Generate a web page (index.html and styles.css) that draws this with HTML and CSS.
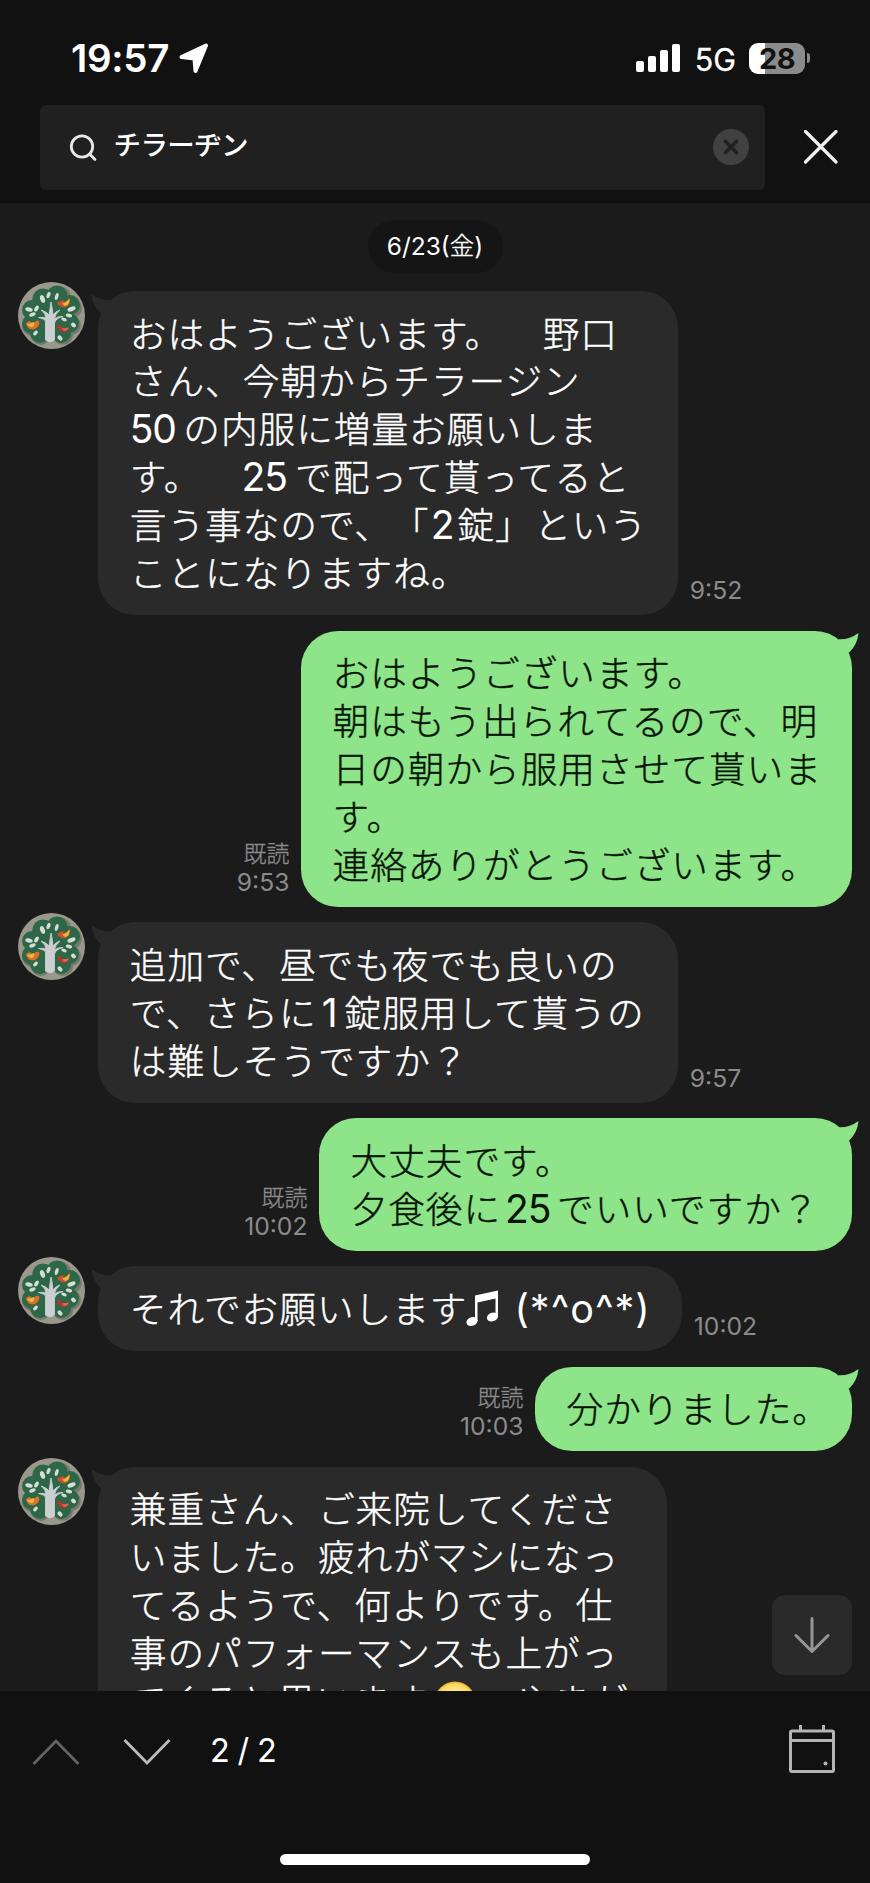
FILE: index.html
```html
<!DOCTYPE html>
<html lang="ja">
<head>
<meta charset="utf-8">
<title>トーク検索</title>
<link rel="stylesheet" href="styles.css">
</head>
<body>
<svg width="0" height="0" class="defs">
  <defs>
    <clipPath id="round"><circle cx="33.5" cy="33.5" r="33.5"/></clipPath>
    <radialGradient id="face" cx="50%" cy="50%" r="50%">
      <stop offset="0.6" stop-color="#ffe680"/><stop offset="0.88" stop-color="#fbd95c"/><stop offset="1" stop-color="#e5a932"/>
    </radialGradient>
    <symbol id="tree" viewBox="0 0 67 67">
      <g clip-path="url(#round)">
        <rect width="67" height="67" fill="#9a988b"/>
        <g fill="#75786c">
          <circle cx="26" cy="19" r="12"/><circle cx="41" cy="16" r="12"/><circle cx="54" cy="26" r="10"/><circle cx="53" cy="43" r="10"/><circle cx="14" cy="44" r="10"/><circle cx="23" cy="53" r="10"/><circle cx="45" cy="53" r="10"/>
        </g>
        <g fill="#2d6748">
          <circle cx="25" cy="17" r="10.5"/><circle cx="39" cy="14" r="10.5"/><circle cx="52" cy="23" r="10"/><circle cx="14" cy="28" r="10"/><circle cx="51" cy="41" r="10"/><circle cx="14" cy="42" r="10"/><circle cx="22" cy="51" r="10"/><circle cx="43" cy="51" r="10"/><circle cx="33" cy="34" r="19"/>
        </g>
        <path d="M27.500 58 V39 Q27 37 20.500 35.500 Q26 35 28 36 Q28 32 23 28 Q29 30 31 33 Q32 27 33 20 Q34.500 27 35 33 Q38 29 42 28 Q37 32 36.500 37 Q40 34 45 34.500 Q38 36 36.500 41 V58 Q32 61.500 27.500 58Z" fill="#cbcfd1" stroke="#cbcfd1" stroke-width="0.900"/>
        <g fill="#d5ddd4">
          <ellipse cx="24.500" cy="17" rx="2.300" ry="4" transform="rotate(-20 24.500 17)"/><ellipse cx="30.500" cy="13" rx="1.800" ry="3.300" transform="rotate(20 30.500 13)"/><ellipse cx="38.700" cy="14.500" rx="1.700" ry="3.600" transform="rotate(15 38.700 14.500)"/>
          <ellipse cx="11" cy="27.500" rx="3.800" ry="2.100" transform="rotate(15 11 27.500)"/><ellipse cx="18.500" cy="26.500" rx="1.800" ry="3.300" transform="rotate(30 18.500 26.500)"/><ellipse cx="14.500" cy="32.500" rx="3.300" ry="1.800" transform="rotate(-20 14.500 32.500)"/>
          <ellipse cx="53.500" cy="27" rx="4.200" ry="2.200" transform="rotate(-20 53.500 27)"/><ellipse cx="51" cy="33.500" rx="3.200" ry="1.700" transform="rotate(15 51 33.500)"/><ellipse cx="46" cy="37.500" rx="2.800" ry="1.600" transform="rotate(20 46 37.500)"/>
          <ellipse cx="55.500" cy="43" rx="2.700" ry="2.100" transform="rotate(40 55.500 43)"/><ellipse cx="17.500" cy="51" rx="2.900" ry="1.700" transform="rotate(-45 17.500 51)"/><ellipse cx="42" cy="56" rx="2.900" ry="2" transform="rotate(50 42 56)"/>
        </g>
        <path d="M8 41 L11.500 39 Q15 42 18 39 Q20 37.500 21.500 40 Q21 47 14.500 47.500 Q9 47 8 41Z" fill="#df702c"/><path d="M8.500 42 Q13 42 16 40 Q17 45 12.500 45Z" fill="#e8bd42"/>
        <path d="M39 20.500 L42 19.500 Q44 17 47 20 L52 16 Q53 23 47 25.500 Q41 25 39 20.500Z" fill="#cf512b"/><path d="M44 21.500 Q48 21 51.500 16.500 Q52 23 47 24Z" fill="#edb63b"/>
        <path d="M39 43.500 Q42 41 44.500 46 L51 45.500 Q50 50 45 50.500 Q40 49 39 43.500Z" fill="#a9392c"/><path d="M44 46.500 L51 45.500 Q49 50 45 48.500Z" fill="#d8664b"/>
      </g>
    </symbol>
    <symbol id="tail" viewBox="0 0 22 24">
      <path d="M0.500 1 Q10 8 20.500 7.300 L18 19 L10 20.800 Q1.500 12.500 0.500 1Z" fill="currentColor"/>
    </symbol>
  </defs>
</svg>

<div class="screen">
  <header class="top">
    <div class="status">
      <span class="clock">19:57</span>
      <svg class="loc" width="30" height="31" viewBox="0 0 30 31"><path d="M2.500 14 L27 2.500 L16.500 28 L15.500 15.500 Z" fill="#fff" stroke="#fff" stroke-width="4" stroke-linejoin="round"/></svg>
      <svg class="signal" width="44" height="28" viewBox="0 0 44 28" fill="#fff"><rect y="17" width="8" height="11" rx="2"/><rect x="12" y="12" width="8" height="16" rx="2"/><rect x="24" y="6" width="8" height="22" rx="2"/><rect x="36" width="8" height="28" rx="2"/></svg>
      <span class="net">5G</span>
      <div class="battery"><span>28</span></div>
      <i class="tip"></i>
    </div>
    <div class="searchrow">
      <div class="search">
        <svg width="28" height="28" viewBox="0 0 28 28" fill="none" stroke="#e8e8e8" stroke-width="2.800" stroke-linecap="round"><circle cx="13" cy="12.500" r="10.700"/><path d="M20.800 20.300 L26 25.500"/></svg>
        <span class="query">チラーヂン</span>
        <svg class="clear" width="36" height="36" viewBox="0 0 36 36"><circle cx="18" cy="18" r="18" fill="#414141"/><path d="M12.300 12.300 L23.700 23.700 M23.700 12.300 L12.300 23.700" stroke="#202020" stroke-width="3.400" stroke-linecap="round"/></svg>
      </div>
      <svg class="close" width="34" height="34" viewBox="0 0 34 34"><path d="M1.500 1.500 L32 32 M32 1.500 L1.500 32" stroke="#f0f0f0" stroke-width="3.200" stroke-linecap="round"/></svg>
    </div>
  </header>

  <main class="chat">
    <div class="date"><span>6/23(<span class="jp">金</span>)</span></div>

    <div class="row in">
      <svg class="avatar"><use href="#tree"/></svg>
      <div class="bubble w1"><svg class="tail"><use href="#tail"/></svg>おはようございます。<span class="gap">　</span>野口<br>さん、今朝からチラージン<br><b class="two">50</b>の内服に増量お願いしま<br>す。<span class="gap">　</span><b class="two">25</b>で配って貰ってると<br>言う事なので、「<b class="one">2</b>錠<span class="close-q">」</span>という<br>ことになりますね。</div>
      <div class="meta">9:52</div>
    </div>

    <div class="row out">
      <div class="meta"><span class="read">既読</span>9:53</div>
      <div class="bubble w2"><svg class="tail"><use href="#tail"/></svg>おはようございます。<br>朝はもう出られてるので、明<br>日の朝から服用させて貰いま<br>す。<br>連絡ありがとうございます。</div>
    </div>

    <div class="row in">
      <svg class="avatar"><use href="#tree"/></svg>
      <div class="bubble w1"><svg class="tail"><use href="#tail"/></svg>追加で、昼でも夜でも良いの<br>で、さらに<b class="one">1</b>錠服用して貰うの<br>は難しそうですか？</div>
      <div class="meta">9:57</div>
    </div>

    <div class="row out">
      <div class="meta"><span class="read">既読</span>10:02</div>
      <div class="bubble w3"><svg class="tail"><use href="#tail"/></svg>大丈夫です。<br>夕食後に<b class="two mid">25</b>でいいですか？</div>
    </div>

    <div class="row in">
      <svg class="avatar"><use href="#tree"/></svg>
      <div class="bubble w4"><svg class="tail"><use href="#tail"/></svg>それでお願いします<svg class="note" width="33" height="37" viewBox="0 0 33 37" fill="#fff"><path d="M9 5.500 L32 0.500 V27 H29.500 V8.500 L11.500 12.500 V31 H9Z"/><ellipse cx="6" cy="31.500" rx="5.700" ry="4.300" transform="rotate(-20 6 31.500)"/><ellipse cx="26.500" cy="27" rx="5.700" ry="4.300" transform="rotate(-20 26.500 27)"/></svg><b class="kao">(*^o^*)</b></div>
      <div class="meta">10:02</div>
    </div>

    <div class="row out">
      <div class="meta"><span class="read">既読</span>10:03</div>
      <div class="bubble w5"><svg class="tail"><use href="#tail"/></svg>分かりました。</div>
    </div>

    <div class="row in">
      <svg class="avatar"><use href="#tree"/></svg>
      <div class="bubble w6"><svg class="tail"><use href="#tail"/></svg>兼重さん、ご来院してくださ<br>いました。疲れがマシになっ<br>てるようで、何よりです。仕<br>事のパフォーマンスも上がっ<br>てくると思います<svg class="emoji" width="42" height="42" viewBox="0 0 42 42"><circle cx="21" cy="21" r="20.500" fill="url(#face)"/><path d="M10 17 q3 -4 6 0 M26 17 q3 -4 6 0 M11 25 q10 12 20 0" fill="none" stroke="#7a4a16" stroke-width="2.500" stroke-linecap="round"/></svg>。やまが</div>
    </div>

    <div class="jump"><svg width="36" height="36" viewBox="0 0 36 36" fill="none" stroke="#969696" stroke-width="3" stroke-linecap="round" stroke-linejoin="round"><path d="M18 1.500 V34.500 M2 18.500 L18 34.500 L34 18.500"/></svg></div>
  </main>

  <footer class="bottom">
    <div class="tools">
      <svg width="48" height="26" viewBox="0 0 48 26" fill="none" stroke="#636363" stroke-width="2.800"><path d="M1.500 25 L24 2 L46.500 25"/></svg>
      <svg class="down" width="48" height="26" viewBox="0 0 48 26" fill="none" stroke="#bcbcbc" stroke-width="2.800"><path d="M1.500 1 L24 24 L46.500 1"/></svg>
      <span class="count">2 / 2</span>
      <svg class="cal" width="46" height="48" viewBox="0 0 46 48" fill="none" stroke="#b4b4b4" stroke-width="3"><rect x="1.500" y="6" width="43" height="40.500" rx="1.500"/><path d="M1.500 15.500 H44.500 M11.500 0 V6 M34.500 0 V6"/><circle cx="36.500" cy="38.500" r="2" fill="#b4b4b4" stroke="none"/></svg>
    </div>
    <div class="home"></div>
  </footer>
</div>
</body>
</html>
```
FILE: styles.css
```css
* { box-sizing: border-box; }
body { margin: 0; background: #111; font-family: Inter, "Noto Sans CJK JP", sans-serif; }
svg { display: block; flex: none; }
b { font-weight: 400; }
.defs { position: absolute; }
.screen { width: 870px; height: 1883px; display: flex; flex-direction: column; background: #111; overflow: hidden; }

.top { height: 203px; flex: none; }
.status { height: 105px; padding: 11px 60px 0 71px; display: flex; align-items: center; color: #fff; }
.clock { font-size: 38.500px; font-weight: 600; width: 109px; letter-spacing: -0.300px; white-space: nowrap; }
.loc { margin-top: 1px; }
.signal { margin-left: 427px; }
.net { font-size: 30.500px; font-weight: 400; margin-left: 15px; width: 55px; margin-top: 2px; -webkit-text-stroke: 0.300px #fff; }
.battery { width: 56px; height: 31px; border-radius: 9px; background: linear-gradient(90deg, #fff 16px, #8b8b8b 16px); color: #111; font-size: 29px; font-weight: 700; line-height: 31px; text-align: center; flex: none; letter-spacing: -0.5px; }
.tip { width: 3px; height: 10px; margin-left: 2px; border-radius: 0 5px 5px 0; background: #8b8b8b; }

.searchrow { display: flex; align-items: center; padding-left: 39.500px; }
.search { width: 725.500px; height: 85px; border-radius: 6px; background: #202020; display: flex; align-items: center; padding: 0 16.500px 0 29.500px; }
.query { font-family: "Noto Sans CJK JP", sans-serif; font-size: 27.500px; font-weight: 500; color: #fff; margin-left: 16.500px; line-height: 40px; letter-spacing: -0.600px; margin-top: -9px; }
.clear { margin-left: auto; margin-top: -1px; }
.close { margin-left: 38.500px; margin-top: -1px; }

.chat { position: relative; height: 1488px; flex: none; overflow: hidden; background: #1b1b1b; padding-top: 17px; display: flex; flex-direction: column; }
.date { width: 135px; height: 53px; margin: 0 auto 18px; border-radius: 27px; background: #151515; color: #fff; font-size: 24.500px; line-height: 52px; text-align: center; flex: none; }
.jp { font-weight: 300; -webkit-text-stroke: 0.300px #fff; }
.row { display: flex; align-items: flex-end; flex: none; margin-bottom: 15.850px; }
.in { padding-left: 18px; }
.out { justify-content: flex-end; padding-right: 18px; }
.avatar { width: 67px; height: 67px; align-self: flex-start; margin-top: -9px; margin-bottom: -9px; }
.bubble { position: relative; border-radius: 37px; padding: 17.500px 0 18.900px 31.500px; line-height: 47.900px; font-family: "Noto Sans CJK JP", sans-serif; font-size: 36.700px; font-weight: 300; letter-spacing: 0.950px; white-space: nowrap; text-spacing-trim: space-all; -webkit-text-stroke: 0.400px currentColor; }
.in .bubble { margin-left: 13.300px; background: #2a2a2a; color: #fff; }
.out .bubble { background: #8de489; color: #061505; }
.tail { position: absolute; width: 22px; height: 24px; left: -7px; top: 1.500px; color: #2a2a2a; }
.out .tail { left: auto; right: -7px; transform: scaleX(-1); color: #8de489; }
.w1 { width: 580px; }
.w2 { width: 551px; }
.w3 { width: 533px; }
.w4 { width: 584px; }
.w5 { width: 317px; }
.w6 { width: 569px; }
.gap { margin-right: 2.500px; }
.close-q { margin-right: 1.500px; }
.bubble b { display: inline-block; font-family: Inter, sans-serif; font-size: 39px; line-height: 40px; letter-spacing: -1.200px; -webkit-text-stroke: 0; }
.two { width: 53.500px; }
.mid { width: 56px; padding-left: 4px; }
.one { width: 28px; padding-right: 3px; text-align: center; }
.note { display: inline-block; margin: 0 15px 0 -1px; vertical-align: -4px; }
.bubble .kao { letter-spacing: 1px; font-size: 39.500px; }
.emoji { display: inline-block; margin: 0 2px 0 5px; vertical-align: -8px; }

.meta { color: #8b8b8b; font-size: 24.700px; font-weight: 400; line-height: 30px; padding-bottom: 9.500px; text-align: right; }
.in .meta { margin-left: 11.500px; }
.out .meta { margin-right: 11.500px; }
.read { display: block; font-family: "Noto Sans CJK JP", sans-serif; font-size: 23px; font-weight: 300; line-height: 30px; -webkit-text-stroke: 0.300px currentColor; }
.jump { position: absolute; right: 18px; top: 1392px; width: 80px; height: 80px; border-radius: 13px; background: #2a2a2a; display: flex; align-items: center; justify-content: center; }

.bottom { flex: 1; display: flex; flex-direction: column; align-items: center; justify-content: space-between; padding: 34px 35px 18px 32px; }
.tools { width: 100%; height: 48px; display: flex; align-items: center; padding-top: 6px; }
.down { margin-left: 43px; }
.count { margin-left: 39px; margin-top: -2px; color: #fff; font-size: 32.500px; line-height: 40px; letter-spacing: -0.700px; }
.cal { margin-left: auto; margin-top: -6px; }
.home { width: 310px; height: 11px; border-radius: 6px; background: #fff; margin-left: 2px; }
```
